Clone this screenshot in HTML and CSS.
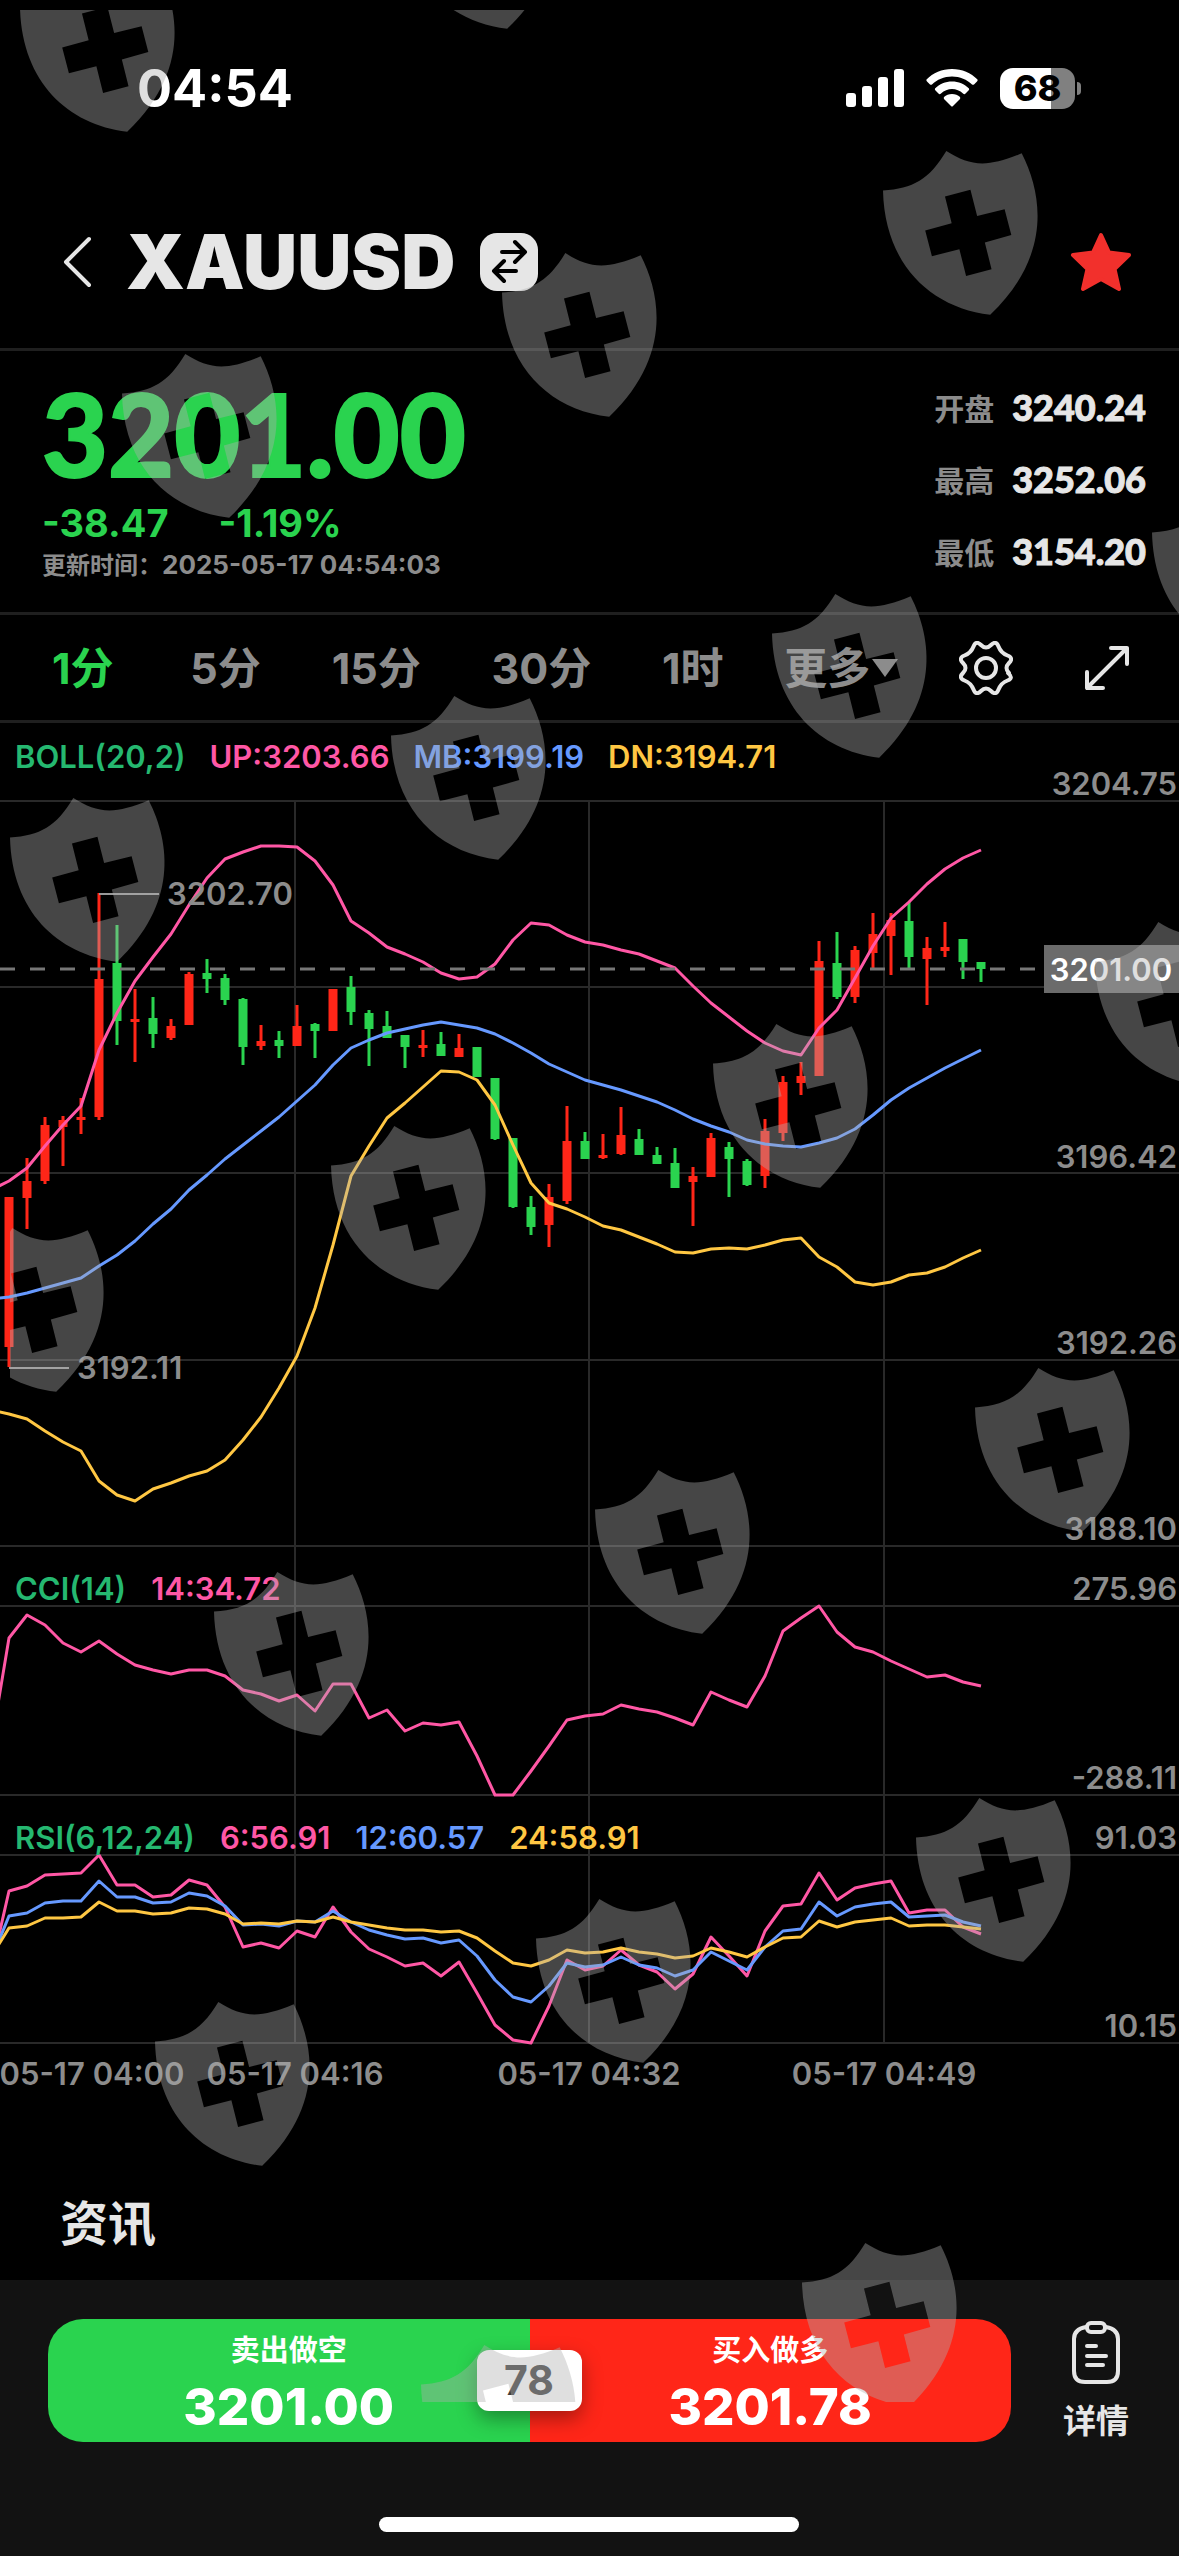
FILE: index.html
```html
<!DOCTYPE html>
<html lang="zh-CN">
   <head>
      <meta charset="utf-8">
      <meta name="viewport" content="width=device-width, initial-scale=1">
      <title>XAUUSD</title>
      <link rel="stylesheet" href="styles.css">
   </head>
   <body>
      <div class="status-bar">
         <span class="clock">04:54</span>
         <div class="status-icons">
            <svg width="58" height="38" viewBox="0 0 58 38" fill="#fff">
               <rect x="0" y="24" width="10" height="14" rx="3"/>
               <rect x="16" y="17" width="10" height="21" rx="3"/>
               <rect x="32" y="8" width="10" height="30" rx="3"/>
               <rect x="48" y="0" width="10" height="38" rx="3"/>
            </svg>
            <svg width="52" height="38" viewBox="0 0 52 38" fill="#fff">
               <path d="M26 0C36 0 45 4 51.500 10.500Q52 11.500 51 12.500L48 15.500Q47 16 46 15.500C41 10.500 34 7.500 26 7.500S11 10.500 6 15.500Q5 16 4 15.500L1 12.500Q0 11.500 .5 10.500C7 4 16 0 26 0Z"/>
               <path d="M26 12.500C32.500 12.500 38.500 15 43 19.500Q43.500 20.500 42.500 21.500L39 25Q38 25.500 37 24.500C34 21.500 30 20 26 20S18 21.500 15 24.500Q14 25.500 13 25L9.500 21.500Q8.500 20.500 9 19.500C13.500 15 19.500 12.500 26 12.500Z"/>
               <path d="M26 25C29 25 32 26 34 28Q34.500 29 34 30L27 37Q26 38 25 37L18 30Q17.500 29 18 28C20 26 23 25 26 25Z"/>
            </svg>
            <div class="battery"><span>68</span></div>
         </div>
      </div>

      <header class="header">
         <button class="icon-btn" aria-label="返回">
            <svg width="30" height="52" viewBox="0 0 30 52" fill="none" stroke="#e6e6e6" stroke-width="4" stroke-linecap="round" stroke-linejoin="round">
               <path d="M27 3L4 26L27 49"/>
            </svg>
         </button>
         <h1>XAUUSD</h1>
         <button class="icon-btn" aria-label="切换品种">
            <svg width="58" height="58" viewBox="0 0 58 58">
               <rect width="58" height="58" rx="17" fill="#e6e6e6"/>
               <g fill="none" stroke="#000" stroke-width="4" stroke-linecap="round" stroke-linejoin="round">
                  <path d="M22 19H45M35 9L45 19L35 29"/>
                  <path d="M36 38H14M24 28L14 38L24 48"/>
               </g>
            </svg>
         </button>
         <button class="icon-btn star" aria-label="收藏">
            <svg width="62" height="60" viewBox="0 0 62 60" fill="#f2302c" stroke="#f2302c" stroke-width="4" stroke-linejoin="round">
               <path d="M31 3L39 20.500L59 23L44.500 37L49 57L31 47L13 57L17.500 37L3 23L23 20.500Z"/>
            </svg>
         </button>
      </header>

      <section class="quote">
         <div class="quote-main">
            <div class="last">3201.00</div>
            <div class="change"><span>-38.47</span><span>-1.19%</span></div>
            <div class="updated">更新时间：<span>2025-05-17 04:54:03</span></div>
         </div>
         <dl class="ohlc">
            <div><dt>开盘</dt><dd>3240.24</dd></div>
            <div><dt>最高</dt><dd>3252.06</dd></div>
            <div><dt>最低</dt><dd>3154.20</dd></div>
         </dl>
      </section>

      <nav class="periods">
         <button class="active">1分</button>
         <button>5分</button>
         <button>15分</button>
         <button>30分</button>
         <button>1时</button>
         <button class="more">更多<i></i></button>
         <button class="icon-btn" aria-label="设置">
            <svg width="54" height="54" viewBox="-27 -27 54 54" fill="none" stroke="#e6e6e6" stroke-width="4" stroke-linejoin="round">
               <path d="M22 5Q28 10 21.500 12.500Q15 15 12.500 21.500Q10 28 5 23Q0 18 -5 23Q-10 28 -12.500 21.500Q-15 15 -21.500 12.500Q-28 10 -23 5Q-18 0 -23 -5Q-28 -10 -21.500 -12.500Q-15 -15 -12.500 -21.500Q-10 -28 -5 -23Q0 -18 5 -23Q10 -28 12.500 -21.500Q15 -15 21.500 -12.500Q28 -10 23 -5Q18 0 23 5Z"/>
               <circle r="10"/>
            </svg>
         </button>
         <button class="icon-btn" aria-label="全屏">
            <svg width="46" height="46" viewBox="0 0 46 46" fill="none" stroke="#e6e6e6" stroke-width="4" stroke-linecap="round" stroke-linejoin="round">
               <path d="M3 43L43 3M27 3H43V19M3 27V43H19"/>
            </svg>
         </button>
      </nav>

      <main>
         <svg class="chart" viewBox="0 723 1179 1387">
            <g class="grid">
               <path d="M0 801H1179M0 987H1179M0 1173H1179M0 1360H1179M0 1546H1179"/>
               <path d="M0 1606H1179M0 1795H1179M0 1855H1179M0 2043H1179"/>
               <path d="M295 801V2043M589 801V2043M884 801V2043"/>
            </g>
            <g id="candles"></g>
            <g id="lines"></g>
            <path class="last-line" d="M0 969H1036"/>
            <path class="mark-line" d="M99 894H159M9 1368H69"/>
            <text class="axis" x="167" y="905">3202.70</text>
            <text class="axis" x="77" y="1379">3192.11</text>

            <text class="legend" x="15" y="768"><tspan class="c-name">BOLL(20,2)</tspan><tspan class="c-pink" dx="24">UP:3203.66</tspan><tspan class="c-blue" dx="24">MB:3199.19</tspan><tspan class="c-yellow" dx="24">DN:3194.71</tspan></text>
            <text class="legend" x="15" y="1600"><tspan class="c-name">CCI(14)</tspan><tspan class="c-pink" dx="25">14:34.72</tspan></text>
            <text class="legend" x="15" y="1849"><tspan class="c-name">RSI(6,12,24)</tspan><tspan class="c-pink" dx="25">6:56.91</tspan><tspan class="c-blue" dx="25">12:60.57</tspan><tspan class="c-yellow" dx="25">24:58.91</tspan></text>

            <g class="axis end">
               <text x="1177" y="795">3204.75</text>
               <text x="1177" y="1168">3196.42</text>
               <text x="1177" y="1354">3192.26</text>
               <text x="1177" y="1540">3188.10</text>
               <text x="1177" y="1600">275.96</text>
               <text x="1177" y="1789">-288.11</text>
               <text x="1177" y="1849">91.03</text>
               <text x="1177" y="2037">10.15</text>
            </g>
            <rect x="1044" y="945" width="135" height="48" fill="#6b6b6b"/>
            <text class="tag" x="1111" y="981">3201.00</text>
            <g class="axis mid">
               <text x="92" y="2085">05-17 04:00</text>
               <text x="295" y="2085">05-17 04:16</text>
               <text x="589" y="2085">05-17 04:32</text>
               <text x="884" y="2085">05-17 04:49</text>
            </g>
         </svg>

         <h2 class="news">资讯</h2>
      </main>

      <footer class="footer">
         <div class="footer-row">
            <div class="trade">
               <button class="sell"><span>卖出做空</span><b>3201.00</b></button>
               <button class="buy"><span>买入做多</span><b>3201.78</b></button>
               <div class="spread">78</div>
            </div>
            <button class="detail">
               <svg width="50" height="64" viewBox="0 0 50 64" fill="none" stroke="#e6e6e6" stroke-width="4" stroke-linecap="round" stroke-linejoin="round">
                  <path d="M15 6Q3 8 3 18V50Q3 61 14 61H36Q47 61 47 50V18Q47 8 35 6"/>
                  <rect x="16" y="2" width="18" height="9" rx="4"/>
                  <path d="M16 25H25M16 35H35M16 44H32"/>
               </svg>
               详情
            </button>
         </div>
         <div class="home-bar"></div>
      </footer>

      <svg class="shields" aria-hidden="true">
         <defs>
            <path id="shield" fill-rule="evenodd" transform="scale(.335) translate(-70 -33)" d="M70 151C160 145 208 118 259 33C330 78 380 84 484 40C550 170 570 350 390 522C210 500 75 370 70 151ZM255 169L275 249L196 270L216 347L298 326L318 406L394 386L374 306L453 284L433 207L351 227L331 149Z"/>
         </defs>
      </svg>

      <script src="chart.js"></script>
   </body>
</html>
```
FILE: styles.css
```css
* {
   box-sizing: border-box;
}
body {
   margin: 0;
   min-height: 100vh;
   display: flex;
   flex-direction: column;
   position: relative;
   background: #000;
   color: #e6e6e6;
   font-family: Inter, "Noto Sans CJK SC", sans-serif;
}
button {
   border: none;
   background: none;
   padding: 0;
   color: inherit;
   font: inherit;
   cursor: pointer;
}
svg {
   display: block;
}
.status-bar {
   display: flex;
   justify-content: space-between;
   align-items: center;
   height: 176px;
   padding: 0 104px 0 137px;
   color: #fff;
}
.clock {
   font-size: 52px;
   font-weight: 700;
}
.status-icons {
   display: flex;
   align-items: center;
   gap: 22px;
}
.battery {
   position: relative;
   width: 75px;
   height: 41px;
   border-radius: 13px;
   background: linear-gradient(to right, #fff 68%, #808080 68%);
   color: #000;
   font-size: 36px;
   font-weight: 800;
   line-height: 41px;
   text-align: center;
}
.battery::after {
   content: "";
   position: absolute;
   right: -6px;
   top: 14px;
   width: 4px;
   height: 13px;
   border-radius: 0 4px 4px 0;
   background: #808080;
}
.header {
   display: flex;
   align-items: center;
   height: 175px;
   padding: 0 47px 0 62px;
   border-bottom: 3px solid #1f1f1f;
}
.header h1 {
   margin: 0 24px 0 34px;
   font-size: 75px;
   font-weight: 900;
   line-height: 80px;
}
.star {
   margin-left: auto;
}
.quote {
   display: flex;
   justify-content: space-between;
   height: 264px;
   padding: 20px 33px 0 42px;
   border-bottom: 3px solid #1f1f1f;
}
.last {
   color: #2ad34f;
   font-family: Lato, sans-serif;
   font-size: 114px;
   font-weight: 900;
   line-height: 124px;
   -webkit-text-stroke: 2px #2ad34f;
}
.change {
   display: flex;
   gap: 50px;
   color: #2ad34f;
   font-size: 38px;
   font-weight: 700;
   line-height: 56px;
}
.updated {
   color: #8c8c8c;
   font-size: 24px;
   font-weight: 700;
   line-height: 28px;
}
.updated span {
   font-size: 26px;
}
.ohlc {
   margin: 0;
}
.ohlc div {
   display: flex;
   align-items: center;
   gap: 18px;
   height: 72px;
}
.ohlc dt {
   color: #8c8c8c;
   font-size: 30px;
   font-weight: 600;
}
.ohlc dd {
   margin: 0;
   font-family: Lato, sans-serif;
   font-size: 36px;
   font-weight: 900;
   -webkit-text-stroke: 1px #e6e6e6;
}
.periods {
   display: flex;
   justify-content: space-between;
   align-items: center;
   height: 108px;
   padding: 0 49px 0 52px;
   border-bottom: 3px solid #1f1f1f;
   color: #8c8c8c;
   font-size: 43px;
   font-weight: 700;
   line-height: 60px;
}
.periods .active {
   margin-right: 6px;
   color: #2ad34f;
}
.more {
   display: flex;
   align-items: center;
   gap: 2px;
   margin: 0 -10px;
}
.more i {
   border: 13px solid transparent;
   border-top: 18px solid #8c8c8c;
   border-bottom: none;
}
main {
   flex: 1;
}
.chart {
   width: 100%;
   font-size: 31px;
   font-weight: 600;
}
.grid path {
   fill: none;
   stroke: #292929;
   stroke-width: 2;
}
.up {
   fill: #ff2618;
}
.down {
   fill: #2ad34f;
}
#lines polyline {
   fill: none;
   stroke-width: 3;
   stroke-linejoin: round;
}
.last-line {
   stroke: #777;
   stroke-width: 3;
   stroke-dasharray: 15 15;
}
.mark-line {
   stroke: #999;
   stroke-width: 2;
}
.axis {
   fill: #8c8c8c;
}
.end {
   text-anchor: end;
}
.mid,
.tag {
   text-anchor: middle;
}
.tag {
   fill: #fff;
}
.c-name {
   fill: #25b870;
}
.c-pink {
   fill: #ff57a5;
}
.c-blue {
   fill: #6699ff;
}
.c-yellow {
   fill: #ffc743;
}
.news {
   margin: 0;
   padding: 79px 60px 0;
   font-size: 48px;
   font-weight: 700;
   line-height: 70px;
}
.footer {
   padding: 39px 50px 24px 48px;
   background: #121212;
}
.footer-row {
   display: flex;
   align-items: center;
   gap: 52px;
}
.trade {
   position: relative;
   flex: 1;
   display: flex;
   height: 123px;
}
.trade button {
   flex: 1;
   display: flex;
   flex-direction: column;
   align-items: center;
   color: #fff;
   font-size: 29px;
   font-weight: 700;
   line-height: 40px;
   padding-top: 12px;
}
.trade b {
   font-size: 51px;
   font-weight: 800;
   line-height: 71px;
}
.sell {
   border-radius: 35px 0 0 35px;
   background: #2ad34f;
}
.buy {
   border-radius: 0 35px 35px 0;
   background: #ff2618;
}
.spread {
   position: absolute;
   left: 50%;
   top: 31px;
   width: 105px;
   margin-left: -53px;
   border-radius: 12px;
   background: #fff;
   box-shadow: 0 8px 20px rgba(0, 0, 0, 0.35);
   color: #404040;
   font-size: 41px;
   font-weight: 700;
   line-height: 61px;
   text-align: center;
}
.detail {
   display: flex;
   flex-direction: column;
   align-items: center;
   font-size: 33px;
   font-weight: 600;
   line-height: 40px;
   gap: 16px;
}
.home-bar {
   width: 420px;
   height: 15px;
   margin: 75px auto 0;
   border-radius: 8px;
   background: #fff;
}
/* pattern lies over the whole page */
.shields {
   position: absolute;
   left: 0;
   top: 0;
   width: 100%;
   height: 100%;
   clip-path: inset(10px 0 154px 0);
   fill: rgba(176, 176, 176, 0.4);
   pointer-events: none;
}
```
FILE: chart.js
```js
var NS = "http://www.w3.org/2000/svg";
var STEP = 18;

// [up, high, open/close top, open/close bottom, low]
var candles = [
  [1, 1197, 1197, 1347, 1367], [1, 1158, 1181, 1198, 1229], [1, 1117, 1125, 1181, 1184], [1, 1116, 1120, 1127, 1166],
  [1, 1098, 1117, 1120, 1134], [1, 893, 979, 1117, 1120], [0, 925, 963, 1021, 1045], [1, 989, 1019, 1022, 1062],
  [0, 997, 1018, 1034, 1048], [1, 1019, 1026, 1038, 1040], [1, 972, 974, 1025, 1025], [0, 959, 973, 979, 993],
  [0, 974, 978, 1000, 1005], [0, 998, 999, 1047, 1065], [1, 1025, 1041, 1046, 1050], [0, 1031, 1040, 1046, 1058],
  [1, 1005, 1026, 1046, 1046], [0, 1023, 1024, 1031, 1058], [1, 989, 989, 1031, 1031], [0, 976, 987, 1012, 1025],
  [0, 1010, 1013, 1029, 1066], [0, 1011, 1026, 1038, 1038], [0, 1035, 1035, 1047, 1068], [1, 1030, 1045, 1048, 1057],
  [0, 1032, 1044, 1056, 1056], [1, 1034, 1048, 1057, 1057], [0, 1047, 1047, 1077, 1077], [0, 1078, 1078, 1139, 1140],
  [0, 1138, 1138, 1207, 1208], [0, 1196, 1207, 1227, 1235], [1, 1184, 1197, 1225, 1247], [1, 1106, 1141, 1201, 1204],
  [0, 1132, 1141, 1159, 1159], [1, 1134, 1155, 1158, 1159], [1, 1107, 1135, 1154, 1155], [0, 1129, 1139, 1155, 1155],
  [0, 1147, 1155, 1164, 1164], [0, 1148, 1163, 1188, 1188], [1, 1167, 1176, 1182, 1226], [1, 1133, 1138, 1177, 1177],
  [0, 1142, 1147, 1159, 1197], [0, 1159, 1161, 1185, 1186], [1, 1119, 1131, 1176, 1188], [1, 1076, 1082, 1133, 1141],
  [1, 1062, 1076, 1083, 1095], [1, 941, 961, 1076, 1076], [0, 932, 963, 997, 999], [1, 946, 950, 997, 1003],
  [1, 913, 934, 953, 968], [1, 913, 920, 936, 975], [0, 902, 921, 957, 968], [1, 937, 948, 959, 1005],
  [1, 922, 947, 951, 957], [0, 939, 939, 962, 979], [0, 962, 962, 969, 982]
];

// every line starts one step left of the first candle
var lines = [
  // BOLL
  ["#ff57a5", [1190, 1181, 1168, 1146, 1125, 1106, 1050, 1013, 981, 957, 934, 905, 878, 859, 852, 846, 846, 847, 861, 885, 921, 933, 947, 954, 962, 973, 979, 977, 964, 940, 923, 925, 935, 942, 945, 950, 954, 961, 968, 986, 1003, 1017, 1031, 1043, 1051, 1055, 1028, 1010, 978, 946, 918, 902, 884, 869, 858, 850]],
  ["#6699ff", [1299, 1297, 1293, 1288, 1283, 1278, 1266, 1255, 1241, 1224, 1209, 1190, 1175, 1159, 1145, 1131, 1117, 1101, 1085, 1065, 1048, 1040, 1033, 1029, 1025, 1022, 1025, 1028, 1034, 1043, 1053, 1064, 1072, 1080, 1085, 1090, 1096, 1102, 1110, 1119, 1126, 1132, 1140, 1144, 1146, 1147, 1143, 1138, 1129, 1115, 1100, 1088, 1078, 1068, 1059, 1050]],
  ["#ffc743", [1410, 1414, 1419, 1431, 1442, 1451, 1481, 1495, 1501, 1489, 1483, 1476, 1471, 1460, 1440, 1417, 1388, 1356, 1308, 1245, 1176, 1146, 1118, 1103, 1087, 1071, 1072, 1080, 1105, 1145, 1183, 1203, 1209, 1217, 1226, 1230, 1237, 1244, 1252, 1253, 1249, 1248, 1249, 1245, 1240, 1238, 1257, 1267, 1282, 1285, 1282, 1275, 1273, 1267, 1258, 1250]],
  // CCI
  ["#ff57a5", [1746, 1638, 1615, 1625, 1643, 1652, 1641, 1654, 1665, 1670, 1674, 1670, 1670, 1676, 1690, 1694, 1701, 1695, 1711, 1684, 1684, 1718, 1710, 1731, 1723, 1725, 1722, 1756, 1795, 1795, 1771, 1746, 1720, 1716, 1714, 1705, 1709, 1712, 1718, 1725, 1692, 1700, 1707, 1676, 1631, 1618, 1606, 1632, 1647, 1652, 1661, 1669, 1677, 1675, 1682, 1686]],
  // RSI
  ["#ff57a5", [1970, 1891, 1886, 1875, 1874, 1873, 1855, 1885, 1885, 1897, 1895, 1880, 1885, 1907, 1947, 1943, 1948, 1931, 1937, 1907, 1932, 1949, 1957, 1966, 1963, 1976, 1962, 1993, 2025, 2040, 2043, 2006, 1960, 1970, 1966, 1950, 1965, 1972, 1989, 1974, 1937, 1956, 1976, 1931, 1906, 1904, 1873, 1900, 1888, 1884, 1881, 1913, 1910, 1910, 1927, 1934]],
  ["#6699ff", [1960, 1916, 1913, 1903, 1901, 1901, 1881, 1897, 1897, 1903, 1902, 1893, 1896, 1906, 1925, 1924, 1926, 1921, 1922, 1911, 1922, 1930, 1935, 1939, 1938, 1943, 1940, 1956, 1980, 1997, 2002, 1986, 1963, 1967, 1965, 1957, 1965, 1968, 1976, 1970, 1952, 1961, 1970, 1947, 1931, 1929, 1902, 1916, 1907, 1904, 1902, 1917, 1916, 1915, 1922, 1926]],
  ["#ffc743", [1957, 1928, 1926, 1918, 1918, 1917, 1902, 1911, 1911, 1914, 1913, 1908, 1909, 1914, 1924, 1923, 1924, 1921, 1922, 1917, 1922, 1925, 1928, 1930, 1930, 1932, 1931, 1938, 1951, 1963, 1966, 1960, 1950, 1953, 1952, 1948, 1952, 1954, 1958, 1956, 1948, 1952, 1957, 1947, 1938, 1937, 1921, 1927, 1922, 1920, 1918, 1926, 1925, 1925, 1927, 1929]]
];

var shields = [
  [20, -32], [400, -135], [883, 151], [502, 253], [122, 354], [1152, 493], [772, 594],
  [391, 696], [10, 798], [1095, 922], [713, 1024], [331, 1126], [975, 1368],
  [595, 1470], [214, 1572], [916, 1798], [536, 1899], [155, 2002], [802, 2243], [421, 2345]
];

function add(parent, name, attrs) {
  var el = document.createElementNS(NS, name);
  for (var key in attrs) {
    el.setAttribute(key, attrs[key]);
  }
  parent.appendChild(el);
  return el;
}

var candleGroup = document.getElementById("candles");
candles.forEach(function(c, i) {
  var x = 9 + i * STEP;
  var cls = c[0] ? "up" : "down";
  add(candleGroup, "rect", { class: cls, x: x - 1.5, y: c[1], width: 3, height: c[4] - c[1] });
  add(candleGroup, "rect", { class: cls, x: x - 4.5, y: c[2], width: 9, height: c[3] - c[2] });
});

var lineGroup = document.getElementById("lines");
lines.forEach(function(line) {
  var points = line[1].map(function(y, i) {
    return (i * STEP - 9) + "," + y;
  });
  add(lineGroup, "polyline", { stroke: line[0], points: points.join(" ") });
});

var shieldLayer = document.querySelector(".shields");
shields.forEach(function(s) {
  add(shieldLayer, "use", { href: "#shield", x: s[0], y: s[1] });
});

// the one on the left edge is cut 10px in
var cut = add(shieldLayer, "svg", { x: 10, y: 1228, width: 100, height: 170 });
add(cut, "use", { href: "#shield", x: -61, y: 0 });
```
